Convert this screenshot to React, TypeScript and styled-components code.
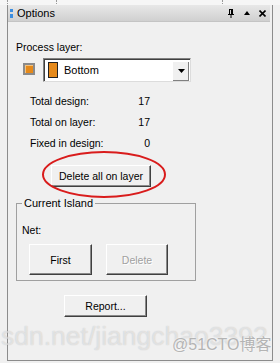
import React from 'react';
import styled, { createGlobalStyle } from 'styled-components';

const GlobalStyle = createGlobalStyle`
    html, body {
        margin: 0;
        padding: 0;
        background: #f0f0f0;
    }
    body {
        font-family: "Liberation Sans", Arial, sans-serif;
        font-size: 10.5px;
        color: #000;
    }
`;

const Frame = styled.div`
    position: relative;
    width: 280px;
    height: 363px;
    display: flex;
    flex-direction: column;
    overflow: hidden;
`;

const TopStrip = styled.div`
    height: 5px;
    background: #f6f6f6;
    display: flex;
`;

const Tick = styled.div<{ $left: number }>`
    margin-left: ${p => p.$left}px;
    width: 1px;
    height: 4px;
    border-left: 1px dotted #9a9a9a;
`;

const Panel = styled.div`
    flex: 1;
    margin: 0 7px 2px;
    border-left: 1px solid #8c8c8c;
    border-right: 1px solid #8c8c8c;
    border-bottom: 1px solid #8c8c8c;
    display: flex;
    flex-direction: column;
`;

const TitleBar = styled.div`
    height: 16px;
    margin-right: 2px;
    background: linear-gradient(#e8e8e8, #d0d0d0);
    border-bottom: 1px solid #c4c4c4;
    display: flex;
    align-items: center;
    padding-left: 2px;
    font-size: 11px;
`;

const Grip = styled.div`
    display: flex;
    flex-direction: column;
    gap: 2px;
    margin-right: 4px;
`;

const GripDot = styled.div<{ $h: number }>`
    width: 3px;
    height: ${p => p.$h}px;
    background: #3b8de0;
`;

const Title = styled.span`
    flex: 1;
`;

const TitleIcons = styled.div`
    display: flex;
    align-items: center;
    gap: 9px;
    margin-right: 4px;
`;

const Content = styled.div`
    padding: 0 8px;
    display: flex;
    flex-direction: column;
    align-items: flex-start;
`;

const Label = styled.div`
    margin-top: 19px;
    line-height: 13px;
`;

const LayerRow = styled.div`
    margin-top: 4px;
    margin-left: 7px;
    display: flex;
    align-items: center;
    gap: 8px;
`;

const Swatch = styled.div`
    width: 8px;
    height: 8px;
    background: #e5891a;
    border: 2px solid #8a8a8a;
    box-shadow: inset 1px 1px #f4c27c;
    margin-top: -2px;
`;

const Select = styled.div`
    width: 146px;
    height: 22px;
    background: #fff;
    border: 1px solid #808080;
    border-right-color: #dcdcdc;
    border-bottom-color: #dcdcdc;
    box-shadow: inset 1px 1px #404040;
    display: flex;
    align-items: center;
`;

const LayerColor = styled.div`
    width: 8px;
    height: 14px;
    margin-left: 4px;
    background: #e5891a;
    border: 1px solid #222;
`;

const SelectText = styled.span`
    flex: 1;
    margin-left: 6px;
    font-size: 11px;
`;

const ArrowButton = styled.div`
    width: 16px;
    height: 19px;
    margin-right: 1px;
    margin-top: 1px;
    background: #f0f0f0;
    border-left: 1px solid #fff;
    border-top: 1px solid #fff;
    box-shadow: inset -1px -1px #808080;
    display: flex;
    align-items: center;
    justify-content: center;
`;

const Stats = styled.div`
    margin-top: 13px;
    margin-left: 14px;
    display: grid;
    grid-template-columns: 100px 20px;
    row-gap: 8px;
    line-height: 13px;
`;

const StatValue = styled.span`
    text-align: right;
`;

const ClassicButton = styled.button<{ $w: number; $h: number; $disabled?: boolean }>`
    width: ${p => p.$w}px;
    height: ${p => p.$h}px;
    flex: none;
    padding: 0;
    white-space: nowrap;
    font-family: inherit;
    font-size: 10.5px;
    color: ${p => (p.$disabled ? '#a0a0a0' : '#000')};
    text-shadow: ${p => (p.$disabled ? '1px 1px #fff' : 'none')};
    background: #f0f0f0;
    border: 1px solid;
    border-color: #ffffff #404040 #404040 #ffffff;
    box-shadow: inset -1px -1px #8a8a8a;
    cursor: default;
`;

const Highlight = styled.div`
    position: relative;
    margin-top: 15px;
    margin-left: 35px;
    display: flex;
`;

const Ellipse = styled.svg`
    position: absolute;
    left: -9px;
    top: -14px;
    overflow: visible;
    pointer-events: none;
`;

const Group = styled.fieldset`
    margin: 10px 0 0 0;
    padding: 0;
    border: 1px solid #a0a0a0;
    box-sizing: border-box;
    width: 180px;
    height: 84px;
    display: flex;
    flex-direction: column;
`;

const GroupTitle = styled.legend`
    margin-left: 5px;
    padding: 0 2px;
    font-size: 11px;
    line-height: 13px;
`;

const NetLabel = styled.div`
    margin: 14px 0 0 5px;
    line-height: 13px;
`;

const ButtonRow = styled.div`
    margin: 7px 0 0 12px;
    display: flex;
    gap: 14px;
`;

const ReportWrap = styled.div`
    margin: 14px 0 0 48px;
    display: flex;
`;

const Watermark = styled.div`
    position: absolute;
    left: 1px;
    top: 321px;
    font-size: 26.5px;
    color: rgba(255, 255, 255, 0.5);
    text-shadow: 0 0 1px rgba(120, 120, 120, 0.4);
    white-space: nowrap;
    pointer-events: none;
`;

const Brand = styled.div`
    position: absolute;
    left: 172px;
    top: 331px;
    font-family: "Liberation Sans", "Noto Sans CJK SC", sans-serif;
    font-size: 16px;
    color: #b4b4b4;
    text-shadow: 0 0 2px #fff;
    white-space: nowrap;
    pointer-events: none;
`;

const PinIcon = () => (
    <svg width="8" height="9" viewBox="0 0 8 9">
        <path d="M2 0h4v5H2z M1 5h6v1H1z M3.5 6h1v3h-1z" fill="#000" />
        <path d="M3 1h1v4H3z" fill="#d8d8d8" />
    </svg>
);

const UpIcon = () => (
    <svg width="6" height="4" viewBox="0 0 6 4">
        <path d="M0 4L3 0L6 4z" fill="#000" />
    </svg>
);

const CloseIcon = () => (
    <svg width="7" height="7" viewBox="0 0 7 7">
        <path d="M0.5 0.5L6.5 6.5M6.5 0.5L0.5 6.5" stroke="#000" strokeWidth="1.6" />
    </svg>
);

const stats = [
    { label: 'Total design:', value: '17' },
    { label: 'Total on layer:', value: '17' },
    { label: 'Fixed in design:', value: '0' },
];

const App = () => {
    return (
        <React.Fragment>
            <GlobalStyle />
            <Frame>
                <TopStrip>
                    <Tick $left={7} />
                    <Tick $left={47} />
                    <Tick $left={164} />
                </TopStrip>
                <Panel>
                    <TitleBar>
                        <Grip>
                            <GripDot $h={3} />
                            <GripDot $h={4} />
                        </Grip>
                        <Title>Options</Title>
                        <TitleIcons>
                            <PinIcon />
                            <UpIcon />
                            <CloseIcon />
                        </TitleIcons>
                    </TitleBar>
                    <Content>
                        <Label>Process layer:</Label>
                        <LayerRow>
                            <Swatch />
                            <Select>
                                <LayerColor />
                                <SelectText>Bottom</SelectText>
                                <ArrowButton>
                                    <svg width="7" height="4" viewBox="0 0 7 4">
                                        <path d="M0 0h7L3.5 4z" fill="#000" />
                                    </svg>
                                </ArrowButton>
                            </Select>
                        </LayerRow>
                        <Stats>
                            {stats.map(s => (
                                <React.Fragment key={s.label}>
                                    <span>{s.label}</span>
                                    <StatValue>{s.value}</StatValue>
                                </React.Fragment>
                            ))}
                        </Stats>
                        <Highlight>
                            <ClassicButton $w={100} $h={22}>Delete all on layer</ClassicButton>
                            <Ellipse width="124" height="47">
                                <ellipse cx="62" cy="23.5" rx="61" ry="22.5" fill="none" stroke="#d91c1c" strokeWidth="2" />
                            </Ellipse>
                        </Highlight>
                        <Group>
                            <GroupTitle>Current Island</GroupTitle>
                            <NetLabel>Net:</NetLabel>
                            <ButtonRow>
                                <ClassicButton $w={63} $h={31}>First</ClassicButton>
                                <ClassicButton $w={62} $h={31} $disabled>Delete</ClassicButton>
                            </ButtonRow>
                        </Group>
                        <ReportWrap>
                            <ClassicButton $w={83} $h={22}>Report...</ClassicButton>
                        </ReportWrap>
                    </Content>
                </Panel>
                <Watermark>sdn.net/jiangchao3392</Watermark>
                <Brand>@51CTO博客</Brand>
            </Frame>
        </React.Fragment>
    );
};

export default App;
